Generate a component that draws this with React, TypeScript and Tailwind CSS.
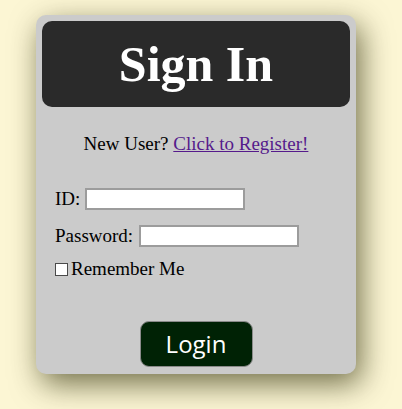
import React, { useState } from 'react';

export default function App() {
    // form state
    const [id, setId] = useState('');
    const [password, setPassword] = useState('');
    const [remember, setRemember] = useState(false);

    return (
        <div className="min-h-[409px] w-full bg-[#fcf6d4] pt-[15px] pl-[36px] font-['Liberation_Serif',serif] text-black">
            <div className="w-[320px] h-[359px] bg-[#cbcbcb] rounded-[10px] p-[6px] shadow-[5px_10px_30px_rgba(40,40,0,0.65)]">
                <div className="h-[86px] rounded-[10px] bg-[#2a2a2a] flex items-center justify-center">
                    <h1 className="text-[50px] font-bold text-white leading-none">Sign In</h1>
                </div>

                <p className="mt-[26px] text-center text-[19px] leading-[22px]">
                    New User? <a href="#" className="text-[#551a8b] underline">Click to Register!</a>
                </p>

                <form className="mt-[33px] pl-[13px] text-[19px]" onSubmit={e => e.preventDefault()}>
                    <div className="flex items-center h-[22px]">
                        <label htmlFor="id">ID:</label>
                        <input
                            id="id"
                            type="text"
                            value={id}
                            onChange={e => setId(e.target.value)}
                            className="ml-[5px] w-[160px] h-[22px] bg-white border-2 border-[#9c9c9c] outline-none px-1 text-[14px]"
                        />
                    </div>
                    <div className="flex items-center h-[22px] mt-[15px]">
                        <label htmlFor="password">Password:</label>
                        <input
                            id="password"
                            type="password"
                            value={password}
                            onChange={e => setPassword(e.target.value)}
                            className="ml-[6px] w-[160px] h-[22px] bg-white border-2 border-[#9c9c9c] outline-none px-1 text-[14px]"
                        />
                    </div>
                    <label className="flex items-center mt-[11px] h-[22px]">
                        <input
                            type="checkbox"
                            checked={remember}
                            onChange={e => setRemember(e.target.checked)}
                            className="appearance-none w-[13px] h-[13px] bg-white border border-[#4a4a4a] m-0"
                        />
                        <span className="ml-[3px]">Remember Me</span>
                    </label>

                    <div className="flex justify-center mt-[41px] -ml-[13px]">
                        <button
                            type="submit"
                            className="w-[113px] h-[46px] rounded-[9px] bg-[#002205] border border-[#8a8a8a] text-white text-[24px] font-['Open_Sans',sans-serif] leading-none"
                        >
                            Login
                        </button>
                    </div>
                </form>
            </div>
        </div>
    );
}
